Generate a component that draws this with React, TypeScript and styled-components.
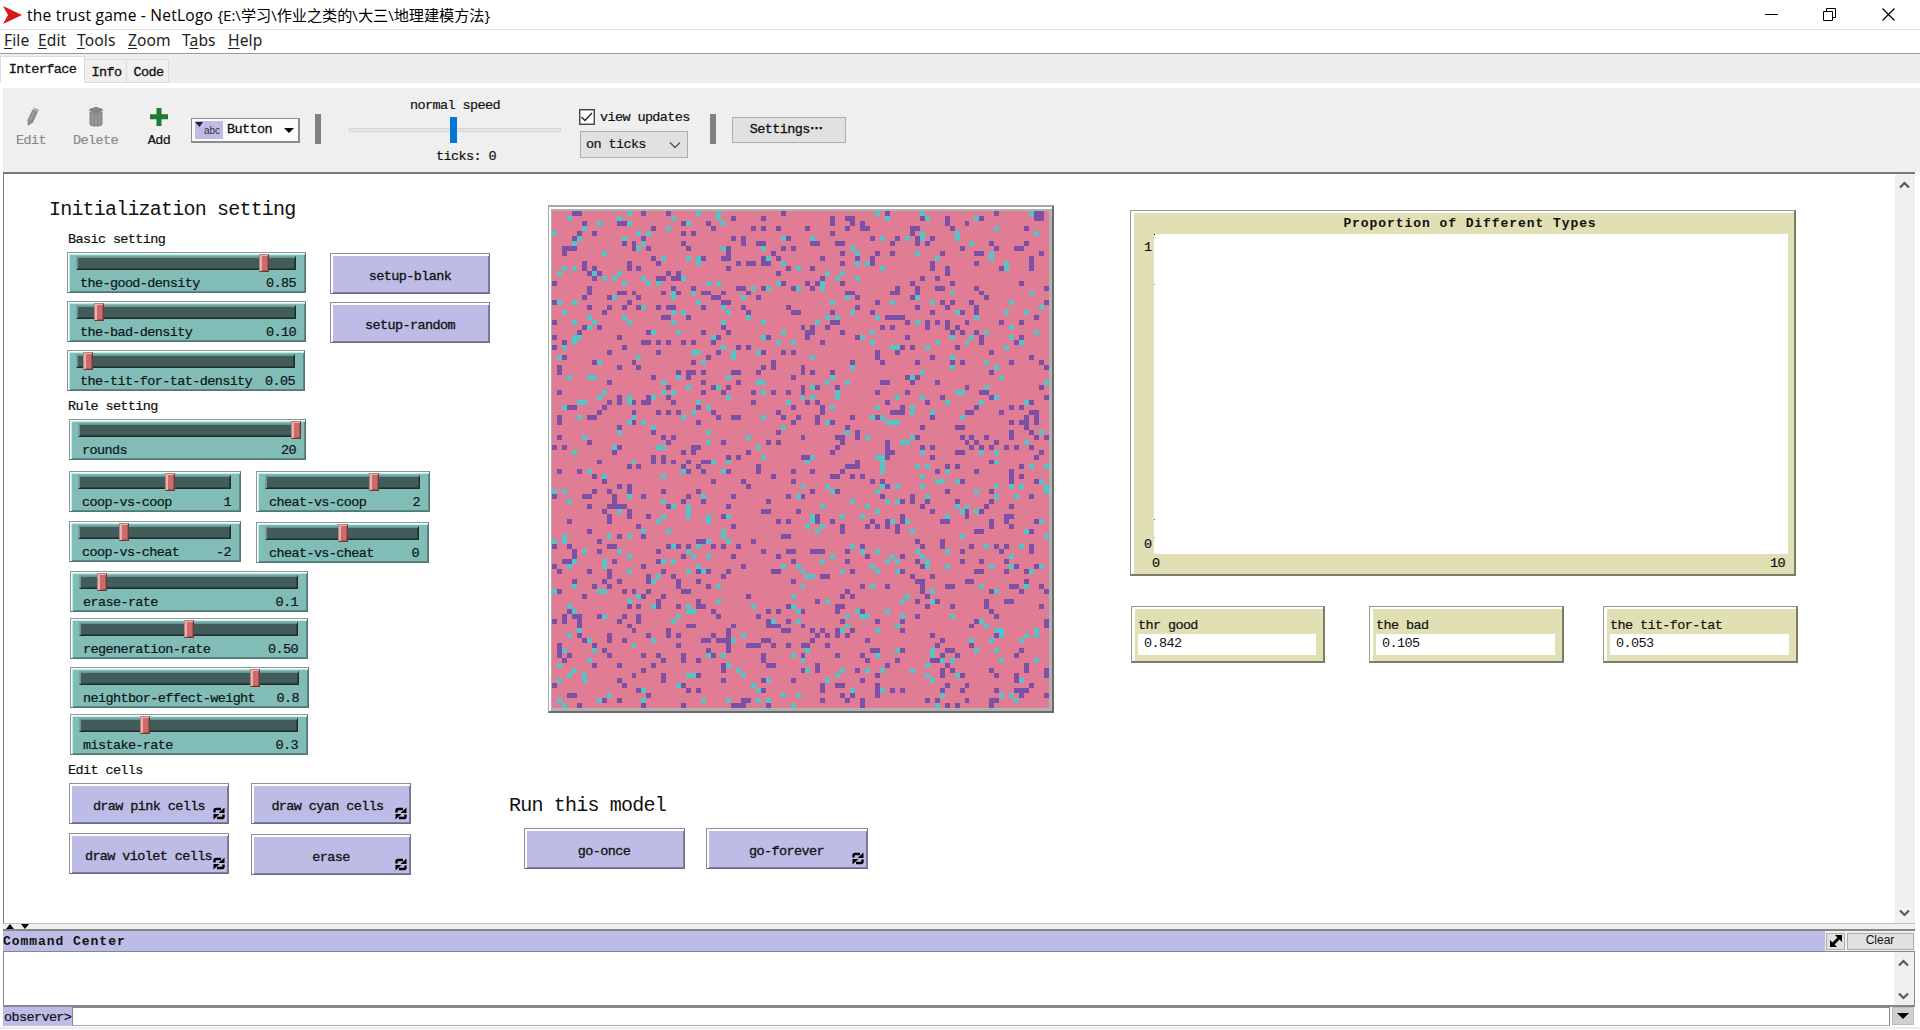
import React from 'react';
import styled, { createGlobalStyle, css } from 'styled-components';

const Global = createGlobalStyle`
  * { box-sizing: border-box; }
  html, body { margin: 0; padding: 0; background: #fff; overflow: hidden; }
`;

const mono = css`
  font-family: 'Liberation Mono', 'Noto Sans CJK SC', monospace;
  font-size: 13.5px;
  letter-spacing: -0.62px;
  line-height: 16px;
  white-space: pre;
  color: #111;
  -webkit-text-stroke: 0.2px currentColor;
`;

const Window = styled.div`
  width: 1920px;
  height: 1030px;
  display: flex;
  flex-direction: column;
  background: #fff;
  overflow: hidden;
`;

/* ---------- title bar and menu ---------- */

const TitleBar = styled.header`
  height: 29px;
  flex: none;
  display: flex;
  align-items: center;
  padding-left: 2px;
`;

const TitleText = styled.div`
  margin-left: 5px;
  flex: 1;
  font-family: 'Open Sans', 'Noto Sans CJK SC', sans-serif;
  font-size: 15.6px;
  letter-spacing: 0.2px;
  line-height: 28px;
  white-space: pre;
  color: #000;
`;

const TitlePath = styled.span`
  font-size: 15.2px;
  letter-spacing: -0.05px;
`;

const WindowButtons = styled.div`
  display: flex;
  width: 178px;
`;

const WindowButton = styled.div`
  width: 58.5px;
  display: flex;
  justify-content: center;
`;

const MenuBar = styled.nav`
  height: 25px;
  flex: none;
  display: flex;
  padding: 0 0 0 4px;
  border-top: 1px solid #dcdcdc;
  border-bottom: 1px solid #9c9c9c;
`;

const MenuItem = styled.div<{ $w: number }>`
  width: ${(p) => p.$w}px;
  font-family: 'Noto Sans', sans-serif;
  font-size: 15.6px;
  letter-spacing: 0.1px;
  line-height: 21px;
  color: #222;
  u { text-underline-offset: 2px; }
`;

/* ---------- tabs and toolbar ---------- */

const TabStrip = styled.div`
  height: 34px;
  flex: none;
  display: flex;
  align-items: flex-end;
  background: #eee;
  border-bottom: 5px solid #fff;
`;

const Tab = styled.div<{ $w: number; $active?: boolean }>`
  ${mono}
  width: ${(p) => p.$w}px;
  height: ${(p) => (p.$active ? 27 : 24)}px;
  line-height: ${(p) => (p.$active ? 26 : 25)}px;
  padding-left: ${(p) => (p.$active ? 0 : 2)}px;
  background: ${(p) => (p.$active ? '#fff' : '#f0f0f0')};
  border: 1px solid #dcdcdc;
  border-left-width: ${(p) => (p.$active ? 1 : 0)}px;
  border-bottom-color: ${(p) => (p.$active ? '#fff' : '#dcdcdc')};
  text-align: center;
  -webkit-text-stroke: 0.3px currentColor;
`;

const Toolbar = styled.div`
  height: 84px;
  flex: none;
  margin-left: 3px;
  display: flex;
  align-items: flex-start;
  background: #efefef;
`;

const Tool = styled.div<{ $w: number; $off?: boolean; $nudge?: number }>`
  ${mono}
  width: ${(p) => p.$w}px;
  height: 66px;
  padding-top: 19px;
  display: flex;
  flex-direction: column;
  align-items: center;
  color: ${(p) => (p.$off ? '#8a8a8a' : '#111')};
  svg { margin: 0 0 6px ${(p) => p.$nudge || 0}px; }
`;

const WidgetPicker = styled.div`
  ${mono}
  width: 109px;
  height: 25px;
  margin: 30px 0 0 5px;
  display: flex;
  align-items: center;
  background: #fbfbfb;
  border: 1px solid #8c8c8c;
  border-right-width: 2px;
  border-bottom-width: 2px;
  padding-left: 3px;
  -webkit-text-stroke: 0.3px currentColor;
`;

const PickerIcon = styled.div`
  width: 28px;
  height: 18px;
  margin-right: 4px;
  background: #bcbce6;
  font: 10px/20px 'Liberation Sans', sans-serif;
  letter-spacing: 0;
  display: flex;
  align-items: flex-start;
  color: #333;
  -webkit-text-stroke: 0;
`;

const PickerName = styled.span`
  width: 57px;
`;

const Separator = styled.div<{ $ml: number }>`
  width: 6px;
  height: 30px;
  margin: 26px 0 0 ${(p) => p.$ml}px;
  background: #808080;
`;

const SpeedBox = styled.div`
  ${mono}
  width: 212px;
  margin: 10px 0 0 28px;
  display: flex;
  flex-direction: column;
  align-items: center;
`;

const SpeedTrack = styled.div`
  position: relative;
  width: 212px;
  height: 4px;
  margin: 14px 0 17px;
  background: #e7e7e7;
  border: 1px solid #d6d6d6;
`;

const SpeedThumb = styled.div`
  position: absolute;
  left: 100px;
  top: -12px;
  width: 7px;
  height: 26px;
  background: #0078d7;
`;

const SpeedLabel = styled.div<{ $shift: number }>`
  padding-left: ${(p) => p.$shift}px;
`;

const UpdateBox = styled.div`
  ${mono}
  width: 112px;
  margin: 21px 0 0 18px;
`;

const CheckRow = styled.div`
  display: flex;
  align-items: center;
  gap: 5px;
  height: 16px;
`;

const CheckLabel = styled.span`
  padding-top: 2px;
`;

const Select = styled.div`
  width: 108px;
  height: 27px;
  margin: 6px 0 0 1px;
  padding: 1px 6px 0 5px;
  display: flex;
  align-items: center;
  justify-content: space-between;
  background: #e1e1e1;
  border: 1px solid #adadad;
`;

const SettingsButton = styled.button`
  ${mono}
  width: 114px;
  height: 26px;
  margin: 29px 0 0 16px;
  padding: 0 5px 1px 0;
  display: flex;
  align-items: center;
  justify-content: center;
  background: #e1e1e1;
  border: 1px solid #adadad;
  -webkit-text-stroke: 0.3px currentColor;
`;

const Dots = styled.span`
  font-weight: 700;
  font-family: 'Liberation Sans', sans-serif;
  letter-spacing: 0;
  padding-bottom: 9px;
`;

/* ---------- interface canvas ---------- */

const CanvasFrame = styled.main`
  height: 752px;
  flex: none;
  display: flex;
  margin: 0 5px 0 3px;
  border-top: 2px solid #7a7a7a;
  border-left: 1px solid #7a7a7a;
  border-bottom: 1px solid #c4c4c4;
`;

const Canvas = styled.div`
  flex: 1;
  display: flex;
  align-items: flex-start;
`;

const ScrollBar = styled.div<{ $w: number; $pt: number; $pb: number }>`
  width: ${(p) => p.$w}px;
  background: #f0f0f0;
  display: flex;
  flex-direction: column;
  justify-content: space-between;
  align-items: center;
  padding: ${(p) => p.$pt}px 2px ${(p) => p.$pb}px 0;
`;

const Column = styled.section<{ $w: number; $ml?: number; $pt: number }>`
  width: ${(p) => p.$w}px;
  margin-left: ${(p) => p.$ml || 0}px;
  padding-top: ${(p) => p.$pt}px;
  flex: none;
  display: flex;
  flex-direction: column;
`;

const Row = styled.div<{ $x: number; $mt: number; $gap?: number }>`
  display: flex;
  align-items: flex-start;
  gap: ${(p) => p.$gap || 0}px;
  padding-left: ${(p) => p.$x}px;
  margin-top: ${(p) => p.$mt}px;
`;

const Stack = styled.div<{ $gap: number }>`
  display: flex;
  flex-direction: column;
  gap: ${(p) => p.$gap}px;
`;

const Note = styled.div`
  ${mono}
`;

const Heading = styled.div`
  ${mono}
  font-size: 20px;
  line-height: 24px;
  letter-spacing: -0.8px;
  -webkit-text-stroke: 0;
`;

const SliderBox = styled.div<{ $w: number }>`
  ${mono}
  width: ${(p) => p.$w}px;
  height: 41px;
  padding: 3px 9px 0 8px;
  background: #82bcb6;
  border: 1px solid #949494;
  border-right-color: #527773;
  border-bottom-color: #527773;
  box-shadow: inset 1px 1px #fff, inset 2px 2px #aef4ee, inset -1px -1px #5d8985;
`;

const SliderTrack = styled.div`
  position: relative;
  height: 14px;
  background: #425c59;
  border: 1px solid #8a9c9a;
  border-right-color: #1f2c2b;
  border-bottom-color: #1f2c2b;
  box-shadow: inset 1px 1px #5f9c96, inset -1px -1px #2e413f;
`;

const SliderThumb = styled.div<{ $x: number }>`
  position: absolute;
  left: ${(p) => p.$x}px;
  top: -3px;
  width: 10px;
  height: 18px;
  background: #cd6a6a;
  border: 1px solid #a08a8a;
  border-right-color: #6d3939;
  border-bottom-color: #6d3939;
  box-shadow: inset 2px 1px #f5abab, inset -1px -1px #a55454;
`;

const SliderCaption = styled.div`
  display: flex;
  justify-content: space-between;
  padding: 6px 0 0 4px;
  color: #0b1514;
`;

const ModelButton = styled.button<{ $w: number; $mt?: number; $shift?: number }>`
  ${mono}
  position: relative;
  width: ${(p) => p.$w}px;
  height: 41px;
  margin: ${(p) => p.$mt || 0}px 0 0;
  padding: 7px ${(p) => -Math.min(p.$shift || 0, 0)}px 0 ${(p) => Math.max(p.$shift || 0, 0)}px;
  background: #bcbce6;
  border: 1px solid #8f8f95;
  border-right-color: #74748e;
  border-bottom-color: #6a6a84;
  box-shadow: inset 2px 2px #fff, inset -1px -1px #7f7f9c;
  -webkit-text-stroke: 0.3px currentColor;
`;

const ForeverMark = styled.svg`
  position: absolute;
  right: 3px;
  bottom: 3px;
`;

const ViewFrame = styled.div`
  width: 506px;
  height: 508px;
  margin-left: 44px;
  border: 1px solid #a6a6a6;
  border-top-width: 2px;
  border-right: 2px solid #6b6b6b;
  border-bottom: 2px solid #6b6b6b;
  box-shadow: inset 2px 2px #fff;
  padding: 2px 0 0 2px;
`;

const ViewInner = styled.div`
  width: 501px;
  height: 502px;
  padding: 2px 0 0 1px;
  background: #b0b0b0;
  svg { display: block; }
`;

const oliveFrame = css`
  background: #e0e0b4;
  border: 1px solid #999;
  border-right: 2px solid #7d7d66;
  border-bottom: 2px solid #7d7d66;
  box-shadow: inset 3px 2px #fff;
`;

const PlotFrame = styled.div`
  ${mono}
  ${oliveFrame}
  width: 666px;
  height: 366px;
  padding: 5px 7px 0 13px;
  display: grid;
  grid-template-columns: 10px 1fr;
  grid-template-rows: 18px 320px 1fr;
`;

const PlotTitle = styled.div`
  grid-column: 1 / 3;
  text-align: center;
  font-weight: 700;
  font-size: 13px;
  letter-spacing: 0.93px;
  padding-left: 8px;
  -webkit-text-stroke: 0;
`;

const YAxis = styled.div`
  display: flex;
  flex-direction: column;
  justify-content: space-between;
  padding: 6px 0 1px;
`;

const PlotArea = styled.svg`
  display: block;
  width: 634px;
  height: 320px;
  background: #fff;
`;

const XAxis = styled.div`
  grid-column: 2;
  display: flex;
  justify-content: space-between;
  padding: 2px 3px 0 0;
  margin-left: -2px;
`;

const Monitor = styled.div<{ $w: number }>`
  ${mono}
  ${oliveFrame}
  width: ${(p) => p.$w}px;
  height: 57px;
  padding: 11px 7px 0 6px;
`;

const MonitorValue = styled.div`
  height: 21px;
  line-height: 20px;
  background: #fff;
  padding-left: 6px;
  -webkit-text-stroke: 0;
`;

/* ---------- command center ---------- */

const Divider = styled.div`
  height: 7px;
  flex: none;
  margin: 0 5px 0 3px;
  display: flex;
  align-items: center;
  gap: 7px;
  padding-left: 3px;
  background: #f0f0f0;
  border-bottom: 2px solid #858585;
`;

const CommandHeader = styled.div`
  height: 20px;
  flex: none;
  margin: 0 5px 0 3px;
  display: flex;
  align-items: center;
  background: #f0f0f0;
`;

const CommandTitle = styled.div`
  ${mono}
  height: 20px;
  line-height: 22px;
  width: 1822px;
  background: #bcbce6;
  font-weight: 700;
  font-size: 13px;
  letter-spacing: 0.96px;
  -webkit-text-stroke: 0;
`;

const SmallButton = styled.button<{ $w: number; $ml: number }>`
  width: ${(p) => p.$w}px;
  height: 17px;
  margin: 0 0 0 ${(p) => p.$ml}px;
  padding: 0;
  display: flex;
  align-items: center;
  justify-content: center;
  background: #e1e1e1;
  border: 1px solid #adadad;
  font: 12px/12px 'Liberation Sans', sans-serif;
  color: #111;
`;

const ClearLabel = styled.span`
  padding: 0 1px 3px 0;
`;

const Output = styled.div`
  height: 56px;
  flex: none;
  margin: 0 5px 0 3px;
  display: flex;
  justify-content: flex-end;
  border: 1px solid #828790;
  border-bottom-width: 2px;
`;

const InputRow = styled.div`
  height: 19px;
  flex: none;
  margin: 0 5px 0 3px;
  display: flex;
`;

const Prompt = styled.div`
  ${mono}
  width: 69px;
  line-height: 22px;
  background: #bcbce6;
  padding-left: 1px;
`;

const CommandInput = styled.div`
  flex: 1;
  border: 1px solid #828790;
  border-bottom-color: #a9adb3;
`;

const HistoryButton = styled.div`
  width: 22px;
  height: 18px;
  margin: 0 1px 0 2px;
  display: flex;
  align-items: center;
  justify-content: center;
  background: #cfcfcf;
  border: 1px solid #bdbdbd;
`;

const BottomEdge = styled.div`
  height: 3px;
  background: #ececec;
  border-top: 1px solid #fff;
`;

const Chevron = ({ up }: { up?: boolean }) => (
  <svg width="11" height="8" viewBox="0 0 11 8">
    <path d={up ? 'M1 6.5 L5.5 2 L10 6.5' : 'M1 1.5 L5.5 6 L10 1.5'} fill="none" stroke="#5a5a5a" strokeWidth="2.2" />
  </svg>
);

const Caret = ({ w = 10, h = 5, up }: { w?: number; h?: number; up?: boolean }) => (
  <svg width={w} height={h} viewBox="0 0 10 5" preserveAspectRatio="none">
    <path d={up ? 'M0 5 L5 0 L10 5 Z' : 'M0 0 H10 L5 5 Z'} fill="#000" />
  </svg>
);

interface SliderProps { w: number; name: string; value: string; thumb: number }

const Slider = ({ w, name, value, thumb }: SliderProps) => (
  <SliderBox $w={w}>
    <SliderTrack><SliderThumb $x={thumb} /></SliderTrack>
    <SliderCaption><span>{name}</span><span>{value}</span></SliderCaption>
  </SliderBox>
);

const Forever = () => (
  <ForeverMark width="12" height="13" viewBox="0 0 12 13">
    <path d="M1.5 5.5 V3.6 Q1.5 2 3.2 2 H8" fill="none" stroke="#000" strokeWidth="2.4" />
    <path d="M11.5 0.5 V6 H5.5 Z" fill="#000" />
    <path d="M10.5 7.5 V9.4 Q10.5 11 8.8 11 H4" fill="none" stroke="#000" strokeWidth="2.4" />
    <path d="M0.5 12.5 V7 H6.5 Z" fill="#000" />
  </ForeverMark>
);

// Patches that differ from the pink ground, one line per row: "violet columns|cyan columns".
const patchRows = `4 5 18 23 46 67 89 97 98|15 29 33 65 74 96
36 42 56 59 60 74 79 86 97 98|3 13 24 33 67 75 85
6 13 14 26 31 56 60 62 79 83|9 15 27 34
20 32 40 42 45 51 59 62 63 72 73 80 95|6 23 89
5 8 26 28 56 72|0 17 19 74 81 97
4 18 36 38 47 64 69 73 76|5 14 46 52 66 71 74 81
14 16 26 38 41 42 52 53 57 58 68 73 75 88 95|4 18 84
2 3 4 16 19 27 35 46 48 82 89 93 94|17 34 42 60
2 35 44 58 65 68 78 85 86 98|10 61 73 88
20 30 34 35 42 45 54 61 64 96|22 27 29 43 77 88
6 15 21 37 39 40 42 43 58 64 76 85 96|29 46 61 63 91
6 8 15 17 35 47 52 76 79 90 96|2 4 49 66 91
7 9 23 25 45 79|1 8 13 55 58
8 21 22 24 25 54 74 77|10 12 18 26 57 61
0 46 51 53 58 72 80 94|14 19 21 31 33 45 54
7 24 28 37 38 42 48 52 69 73 77 78 85 99|40 43 49 54
7 13 14 16 22 25 30 31 34 39 59 60 68 69 73 86|24 28 80 96
6 11 17 32 33 41 61 72 87|12 24 38 59 73
0 15 34 35 65 78 80 84 99|1 4 29 56 68 76 92
7 11 14 17 21 23 24 30 38 47 61 73 79 85|18 34 98
10 39 48 49 56 64 76 82 85|2 24 26 35 60 81 91 95
22 23 27 67 68 69 70 97|7 14 39 55 57 65 85
0 56 57 71 75 77 79 83 90 94|4 8 15 24 34 42 53 73
6 9 34 50 52 55 66 68 75 79 81|7 92
5 19 30 35 51 52 58 80 82 85|20 25 46 64 87 97
0 13 33 43 51 61 71 86 94|4 5 32 42 62 80 84 92
2 18 19 21 23 26 28 32 54 86 93|4 45 48 64 77 83 94
0 14 37 39 70 72 81|2 34 68 69 75 91
11 21 33 42 46 48 65 69 88|28 29 36 41
2 31 65 76 96|1 17 36 52 80
8 16 28 44 60 66 73 80 82 92 98|9 30 87
1 13 17 42 44 50 99|60 80 89
1 25 27 28 30 36 37 41 50 52 56 88|74
20 27 48 71 73|3 7 8 25 35 56 72 90
11 30 37 66 67 72 77|22 41 42 55 59 99
23 32 35 50 53 57 83 98|27 33 52 87
1 30 34 40 44 47 50 65 71 86 87|10 22 24 42 57 81 82
13 19 23 78 88 99|9 15 20 35 50 52 57 69 74 89
11 13 16 18 19 24 40 51 53 67 75 96|5 6 15 29 47 79 86 95
3 4 10 29 48 54 70 85 92 94|2 31 56 65 72
9 16 21 23 25 32 45 54 68 69 70 83 84 90 96 97|28 72 76
1 7 8 33 36 37 46 49 53 60 65 76 95 97|5 16 26 42 64 66 82
1 16 29 48 53 56 92 94 95 97|15 18 55 67 68 69
13 59 74 81 82 95|20 46
20 45 61 92 96|13 31 59 98
1 22 24 50 57 58 61 73 82 84 87 92 97 99|6 39 63 72
7 23 34 43 45 58 67 83 85 89|31 70 71 95
0 2 13 28 29 57 67 74 76 84 86 88 91 93 96|12 21 22 41
12 26 28 39 56 67 68 81 82 98|4 74 86 89
20 22 35 37 50 51 67 76 97|42 52 65 66
9 20 22 24 27 30 31 61 88|16 32 35 51 66 89
15 17 26 29 41 59 60 61 79 81 94|66 73 75 96 99
1 5 27 30 35 41 48 52 58 77 85 92|7 26 34 66 79
8 44 56 57 60 62 92 94|10 22 74
10 32 38 48 64 66 82 92 97|77 78 81 98
13 15 39 67|50 55 66 69 74 89 92 94 99
8 11 15 22 29 52 57 79 88|0 2 56 65 85 99
0 6 7 12 18 27 36 47 50 66 72 96|15 30 49 75 89 93
12 26 30 43 70 72 75 81 88|3 22 60 67 69
7 11 12 13 14 23 35 74 87 92|24 27 54 63 81 83
10 15 42 43 49 76 83 86|13 27 65 82 85
11 15 19 34 53 70 83 91 92|22 27 31 35 52 58 62 79
3 11 45 47 53 56 64 67 70 78 79 88 91 97|21 31 52 68 71 98
17 36 58 63 65 67 69 88 92|51 54
7 58 69 85 86 96|18 23 34 53 72 95
13 18 46 47|2 11 15 34 82 99
9 29 30 40 73 78|0 2 31 35
0 3 11 12 23 25 27 32 34 37 62 74 78 84 89 91 96|24 29 60 87 94
4 9 21 42 47 48 52 53 54 59 82 90 96|6 13 27 62 65 73 79
4 26 36 45 63 70|15 28 31 56 68 74 92
2 3 12 21 48 59 73 82 86 91|4 10 22 24 54 67 69 75
0 18 38 74 93 97|3 10 29 46 49 64 75 79 88 92 98
1 7 11 22 29 31 35 44 45 60 70 85 86 91 95|15 27 30 50 58 65 69 96
11 19 24 34 54 55 72 76|21 51 52
4 10 13 19 25 29 48 73 74 83 84 95|20
8 11 25 31 62 67 74 79 80 92 93 98|4 33 50 64 86 95
1 14 16 19 26 27 59 74 88 94 99|0 9 10 76 89
6 18 22 39 58 60 75|17 48 71
21 29 53 73 77 87 91 92|15 33 55 70 76
15 17 21 25 29 30 47 57 58 75 80 87 98|3 20 27 40 48
3 32 43 45 50 57 62 88|4 27 28 49 61 67
2 4 5 9 14 17 33 41 73 89|10 25 59 62 63 70 80
0 2 5 13 17 43 47 58 65 70 85 99|24 44 49 86
5 15 27 28 36 43 44 45 50 84 99|59 69 87
16 23 35 46 47 52 54 57 60 70|5 58 65 89 90 97
5 11 19 23 25 32 35 53 55 57 59 76 89|3 38 90 95 97
6 11 14 30 31 33 34 35 42 43 52 63 78|7 20 36 84 88 94
1 8 25 35 39 40 41 44 47 50 51 55 77 84|16
1 10 31 35 64 65 70 79 80 94|2 8 51 69 76 85 89
1 3 11 18 21 26 32 42 50 57 62 78 81 93|31 34 48 65 76
2 22 26 29 42 63 69 76 77|7 50 78 80 90 97
8 13 20 34 43 44 53 67 79 95|1 35 75
18 34 50 53 61 78 80 88 95 99|4 37 51 58 63 66 72
16 22 29 65 78 82 89 93 99|3 6 27 28 38 57 75 81
13 22 34 42 48 62 93|1 6 43 55 76 94
0 14 26 54 57 58 65 79 83 96|25 40
17 27 29 42 54 65 68 70 78 82 89 93 94 95|18 41 60 66
3 4 19 58 60 65 94 99|11 46 49 78 90 92
10 13 38 39 54 59 62 75 77 83 88 89|1 9 18 30 35 41 43 93
5 18 26 36 37 38 43 62 79 81 88|2 48 77`.split('\n');

// Patches are five pixels wide; three of every hundred lose one pixel to scaling.
const edge = (i: number) => i * 5 - (i > 16 ? 1 : 0) - (i > 50 ? 1 : 0) - (i > 83 ? 1 : 0);

const patchPath = (kind: number) =>
  patchRows
    .map((line, r) =>
      line.split('|')[kind].split(' ').map(Number)
        .map((c) => `M${edge(c)} ${edge(r)}H${edge(c + 1)}V${edge(r + 1)}H${edge(c)}Z`)
        .join(''))
    .join('');

const World = () => (
  <svg width="497" height="497" shapeRendering="crispEdges">
    <rect width="497" height="497" fill="#e07d94" />
    <path d={patchPath(0)} fill="#7c50a4" />
    <path d={patchPath(1)} fill="#54c4c4" />
  </svg>
);

const menus: [string, string, string, number][] = [
  ['', 'F', 'ile', 34], ['', 'E', 'dit', 39], ['', 'T', 'ools', 51],
  ['', 'Z', 'oom', 54], ['T', 'a', 'bs', 46], ['', 'H', 'elp', 50],
];

export default function App() {
  return (
    <Window>
      <Global />
      <TitleBar>
        <svg width="20" height="20" viewBox="0 0 20 20">
          <path d="M1 1 L20 10 L1 19 L6 10 Z" fill="#d8181c" />
        </svg>
        <TitleText>the trust game - NetLogo <TitlePath>{'{E:\\学习\\作业之类的\\大三\\地理建模方法}'}</TitlePath></TitleText>
        <WindowButtons>
          <WindowButton><svg width="13" height="13"><path d="M0 6.5H13" stroke="#000" /></svg></WindowButton>
          <WindowButton>
            <svg width="13" height="13"><path d="M0.5 3.5h9v9h-9zM3.5 3V0.5h9v9H10" fill="none" stroke="#000" /></svg>
          </WindowButton>
          <WindowButton><svg width="13" height="13"><path d="M0.5 0.5l12 12M12.5 0.5l-12 12" stroke="#000" strokeWidth="1.2" /></svg></WindowButton>
        </WindowButtons>
      </TitleBar>
      <MenuBar>
        {menus.map(([a, u, b, w]) => <MenuItem key={u} $w={w}>{a}<u>{u}</u>{b}</MenuItem>)}
      </MenuBar>
      <TabStrip>
        <Tab $w={85} $active>Interface</Tab>
        <Tab $w={42}>Info</Tab>
        <Tab $w={42}>Code</Tab>
      </TabStrip>
      <Toolbar>
        <Tool $w={56} $off $nudge={3}>
          <svg width="14" height="20" viewBox="0 0 14 20">
            <path d="M6.5 2.5 L12 4.5 L7 15.5 L1.8 19 L1.5 13 Z" fill="#8b8b8b" />
            <path d="M7.5 0.8 L12.8 2.6 L12.3 4.2 L6.9 2.2 Z" fill="#a3a3a3" />
            <path d="M8.2 4.5 L4 13.5" stroke="#b5b5b5" />
          </svg>
          Edit
        </Tool>
        <Tool $w={73} $off>
          <svg width="16" height="20" viewBox="0 0 16 20">
            <ellipse cx="8" cy="3" rx="7" ry="2.6" fill="#858585" />
            <path d="M6 1.2 Q8 -0.4 10 1.2" fill="none" stroke="#777" />
            <path d="M1.5 5 H14.5 V17 Q14 19.6 8 19.6 Q2 19.6 1.5 17 Z" fill="#8b8b8b" />
            <path d="M4.5 7V17M8 7.5V18M11.5 7V17" stroke="#a5a5a5" />
          </svg>
          Delete
        </Tool>
        <Tool $w={54}>
          <svg width="18" height="20" viewBox="0 0 18 20">
            <path d="M6.5 1H11.5V7.3H18V12.3H11.5V19H6.5V12.3H0V7.3H6.5Z" fill="#1c7a33" />
          </svg>
          Add
        </Tool>
        <WidgetPicker>
          <PickerIcon>
            <svg width="9" height="8" viewBox="0 0 9 8"><path d="M0 1H8L4.5 6Z" fill="#1e1e46" /></svg>abc
          </PickerIcon>
          <PickerName>Button</PickerName>
          <Caret />
        </WidgetPicker>
        <Separator $ml={15} />
        <SpeedBox>
          <SpeedLabel $shift={0}>normal speed</SpeedLabel>
          <SpeedTrack><SpeedThumb /></SpeedTrack>
          <SpeedLabel $shift={22}>ticks: 0</SpeedLabel>
        </SpeedBox>
        <UpdateBox>
          <CheckRow>
            <svg width="16" height="16" viewBox="0 0 16 16">
              <rect x="0.75" y="0.75" width="14.5" height="14.5" fill="#fff" stroke="#333" strokeWidth="1.3" />
              <path d="M2.5 8 L6 11.5 L13 4" fill="none" stroke="#222" strokeWidth="1.3" />
            </svg>
            <CheckLabel>view updates</CheckLabel>
          </CheckRow>
          <Select>
            on ticks
            <svg width="12" height="8" viewBox="0 0 12 8"><path d="M1 1.5 L6 6.5 L11 1.5" fill="none" stroke="#555" strokeWidth="1.3" /></svg>
          </Select>
        </UpdateBox>
        <Separator $ml={19} />
        <SettingsButton>Settings<Dots>…</Dots></SettingsButton>
      </Toolbar>

      <CanvasFrame>
        <Canvas>
          <Column $w={500} $pt={24}>
            <Row $x={45} $mt={0}><Heading>Initialization setting</Heading></Row>
            <Row $x={64} $mt={10}><Note>Basic setting</Note></Row>
            <Row $x={63} $mt={4} $gap={24}>
              <Stack $gap={8}>
                <Slider w={239} name="the-good-density" value="0.85" thumb={182} />
                <Slider w={239} name="the-bad-density" value="0.10" thumb={17} />
                <Slider w={238} name="the-tit-for-tat-density" value="0.05" thumb={6} />
              </Stack>
              <Stack $gap={8}>
                <ModelButton $w={160} $mt={1}>setup-blank</ModelButton>
                <ModelButton $w={160}>setup-random</ModelButton>
              </Stack>
            </Row>
            <Row $x={64} $mt={8}><Note>Rule setting</Note></Row>
            <Row $x={65} $mt={4}><Slider w={237} name="rounds" value="20" thumb={212} /></Row>
            <Row $x={65} $mt={11} $gap={15}>
              <Slider w={172} name="coop-vs-coop" value="1" thumb={86} />
              <Slider w={174} name="cheat-vs-coop" value="2" thumb={103} />
            </Row>
            <Row $x={65} $mt={9} $gap={15}>
              <Slider w={172} name="coop-vs-cheat" value="-2" thumb={40} />
              <Row $x={0} $mt={1}><Slider w={173} name="cheat-vs-cheat" value="0" thumb={72} /></Row>
            </Row>
            <Row $x={66} $mt={8}><Slider w={238} name="erase-rate" value="0.1" thumb={17} /></Row>
            <Row $x={66} $mt={6}><Slider w={238} name="regeneration-rate" value="0.50" thumb={104} /></Row>
            <Row $x={66} $mt={8}><Slider w={239} name="neightbor-effect-weight" value="0.8" thumb={170} /></Row>
            <Row $x={66} $mt={6}><Slider w={238} name="mistake-rate" value="0.3" thumb={60} /></Row>
            <Row $x={64} $mt={8}><Note>Edit cells</Note></Row>
            <Row $x={65} $mt={4} $gap={22}>
              <ModelButton $w={160}>draw pink cells<Forever /></ModelButton>
              <ModelButton $w={160} $shift={-7}>draw cyan cells<Forever /></ModelButton>
            </Row>
            <Row $x={65} $mt={9} $gap={22}>
              <ModelButton $w={160} $shift={-1}>draw violet cells<Forever /></ModelButton>
              <ModelButton $w={160} $mt={1}>erase<Forever /></ModelButton>
            </Row>
          </Column>

          <Column $w={552} $pt={31}>
            <ViewFrame><ViewInner><World /></ViewInner></ViewFrame>
            <Row $x={5} $mt={81}><Heading>Run this model</Heading></Row>
            <Row $x={20} $mt={10} $gap={21}>
              <ModelButton $w={161} $shift={-1}>go-once</ModelButton>
              <ModelButton $w={162} $shift={-1}>go-forever<Forever /></ModelButton>
            </Row>
          </Column>

          <Column $w={668} $ml={74} $pt={36}>
            <PlotFrame>
              <PlotTitle>Proportion of Different Types</PlotTitle>
              <YAxis><span>1</span><span>0</span></YAxis>
              <PlotArea>
                <rect x="0" y="0" width="1" height="1" fill="#000" />
                <rect x="0" y="50" width="1" height="1" fill="#e07d94" />
                <rect x="0" y="285" width="1" height="1" fill="#7c50a4" />
                <rect x="0" y="303" width="1" height="1" fill="#54c4c4" />
              </PlotArea>
              <XAxis><span>0</span><span>10</span></XAxis>
            </PlotFrame>
            <Row $x={1} $mt={30}>
              <Monitor $w={194}>thr good<MonitorValue>0.842</MonitorValue></Monitor>
              <Row $x={44} $mt={0}><Monitor $w={195}>the bad<MonitorValue>0.105</MonitorValue></Monitor></Row>
              <Row $x={39} $mt={0}><Monitor $w={195}>the tit-for-tat<MonitorValue>0.053</MonitorValue></Monitor></Row>
            </Row>
          </Column>
        </Canvas>
        <ScrollBar $w={20} $pt={7} $pb={6}><Chevron up /><Chevron /></ScrollBar>
      </CanvasFrame>

      <Divider><Caret w={8} up /><Caret w={8} /></Divider>
      <CommandHeader>
        <CommandTitle>Command Center</CommandTitle>
        <SmallButton $w={19} $ml={1}>
          <svg width="12" height="12" viewBox="0 0 12 12">
            <path d="M5 0H12V7L9.5 4.6L4.6 9.5L7 12H0V5L2.5 7.4L7.4 2.5Z" fill="#000" />
          </svg>
        </SmallButton>
        <SmallButton $w={67} $ml={2}><ClearLabel>Clear</ClearLabel></SmallButton>
      </CommandHeader>
      <Output><ScrollBar $w={20} $pt={7} $pb={5}><Chevron up /><Chevron /></ScrollBar></Output>
      <InputRow>
        <Prompt>observer&gt;</Prompt>
        <CommandInput />
        <HistoryButton><Caret w={12} h={6} /></HistoryButton>
      </InputRow>
      <BottomEdge />
    </Window>
  );
}
